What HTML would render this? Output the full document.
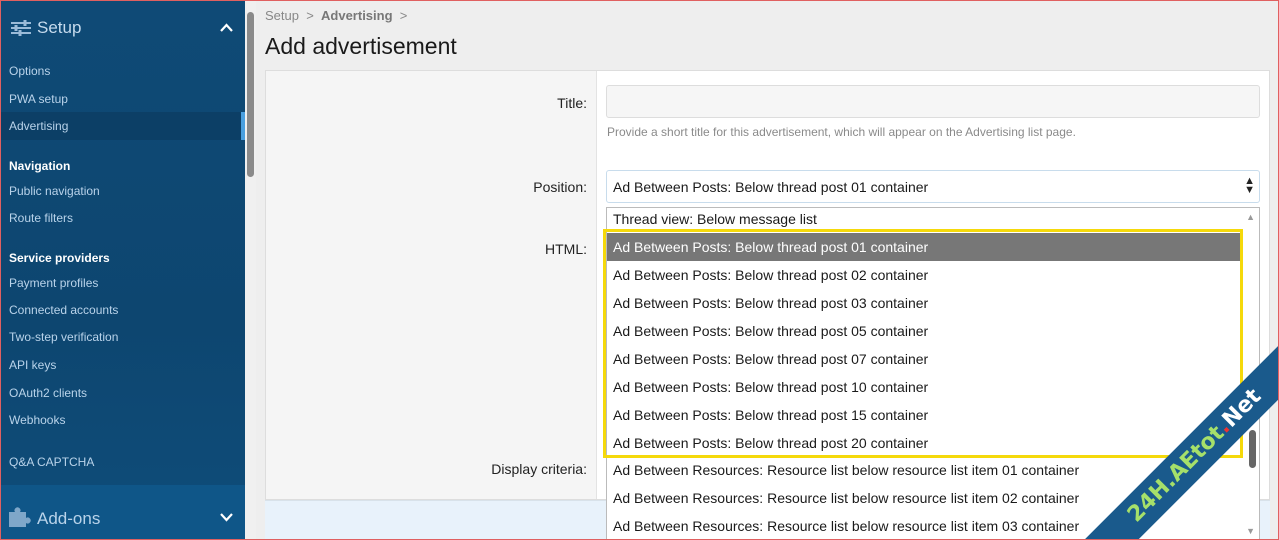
<!DOCTYPE html>
<html><head><meta charset="utf-8"><style>
*{box-sizing:border-box;margin:0;padding:0}
html,body{width:1279px;height:540px;overflow:hidden}
body{position:relative;background:#eeeeee;font-family:"Liberation Sans",sans-serif}
.sb{position:absolute;left:0;top:0;width:245px;height:540px;background:linear-gradient(#0f4a76,#0d4670 60%,#0f4d7a)}
.sb div{position:absolute;left:9px;color:#b9d3ea;font-size:12px}
.sb .h{color:#fff;font-weight:bold}
.scr{position:absolute;left:245px;top:0;width:11px;height:540px;background:#f0f0f0}
.scr i{position:absolute;left:2px;top:12px;width:7px;height:165px;background:#8a8a8a;border-radius:4px}
.lbl{position:absolute;color:#222;font-size:14px;text-align:right;width:322px;left:265px}
.dd{position:absolute;left:606px;top:207px;width:654px;height:333px;background:#fff;border:1px solid #bbb;border-bottom:none;overflow:hidden}
.it{position:absolute;left:6px;font-size:14px;color:#1a1a1a;white-space:nowrap}
</style></head><body>
<div class="sb">
<svg style="position:absolute;left:10px;top:20px" width="22" height="16" viewBox="0 0 22 16" fill="none" stroke="#9bbbd8" stroke-width="2"><path d="M1 3h20M1 8h20M1 13h20"/><path d="M15 0v6M6 5v6M10 10v6" stroke-width="3"/></svg>
<div style="left:37px;top:18px;font-size:17px;color:#c6dbee">Setup</div>
<svg style="position:absolute;left:220px;top:23px" width="13" height="9" viewBox="0 0 13 9" fill="none" stroke="#fff" stroke-width="2.2"><path d="M1 8l5.5-6 5.5 6"/></svg>
<div style="top:64px">Options</div>
<div style="top:92px">PWA setup</div>
<div style="left:0;top:112px;width:245px;height:28px;background:#0c3f66"></div>
<div style="left:241px;top:112px;width:4px;height:28px;background:#4aa0e0"></div>
<div style="top:119px">Advertising</div>
<div class="h" style="top:159px">Navigation</div>
<div style="top:184px">Public navigation</div>
<div style="top:211px">Route filters</div>
<div class="h" style="top:251px">Service providers</div>
<div style="top:276px">Payment profiles</div>
<div style="top:303px">Connected accounts</div>
<div style="top:330px">Two-step verification</div>
<div style="top:358px">API keys</div>
<div style="top:386px">OAuth2 clients</div>
<div style="top:413px">Webhooks</div>
<div style="top:455px">Q&amp;A CAPTCHA</div>
<div style="left:0;top:485px;width:245px;height:55px;background:#0f5688"></div>
<svg style="position:absolute;left:9px;top:507px" width="22" height="20" viewBox="0 0 22 20" fill="#7fa7c9"><path d="M0 5h6a3 3 0 1 1 5 0h6v6a3 3 0 1 1 0 5v4H0z"/></svg>
<div style="left:37px;top:509px;font-size:17px;color:#b9d3ea">Add-ons</div>
<svg style="position:absolute;left:220px;top:513px" width="13" height="9" viewBox="0 0 13 9" fill="none" stroke="#fff" stroke-width="2.2"><path d="M1 1l5.5 6 5.5-6"/></svg>
</div>
<div class="scr"><i></i></div>
<div style="position:absolute;left:265px;top:8px;font-size:13px;color:#888">Setup &nbsp;&gt;&nbsp; <b style="color:#777">Advertising</b> &nbsp;&gt;</div>
<div style="position:absolute;left:265px;top:33px;font-size:23px;color:#1a1a1a">Add advertisement</div>
<div style="position:absolute;left:265px;top:70px;width:1005px;height:430px;background:#fff;border:1px solid #ddd"></div>
<div style="position:absolute;left:266px;top:71px;width:331px;height:428px;background:#f5f5f5;border-right:1px solid #e3e3e3"></div>
<div style="position:absolute;left:265px;top:500px;width:1005px;height:40px;background:#e8f2fb;border-top:1px solid #d8e2ea"></div>
<div class="lbl" style="top:95px">Title:</div>
<div class="lbl" style="top:179px">Position:</div>
<div class="lbl" style="top:241px">HTML:</div>
<div class="lbl" style="top:461px">Display criteria:</div>
<div style="position:absolute;left:606px;top:85px;width:654px;height:33px;background:#f6f6f6;border:1px solid #ddd;border-radius:3px"></div>
<div style="position:absolute;left:607px;top:125px;font-size:12px;color:#8a8a8a">Provide a short title for this advertisement, which will appear on the Advertising list page.</div>
<div style="position:absolute;left:606px;top:170px;width:654px;height:33px;background:#fff;border:1px solid #c8dcec;border-radius:3px"><span style="position:absolute;left:6px;top:8px;font-size:14px;color:#1a1a1a">Ad Between Posts: Below thread post 01 container</span><span style="position:absolute;right:4px;top:6px;font-size:11px;line-height:9px;color:#222">▲<br>▼</span></div>
<div class="dd">
<div class="it" style="top:3px">Thread view: Below message list</div>
<div style="position:absolute;left:0;top:25px;width:633px;height:28px;background:#777"></div>
<div class="it" style="top:31px;color:#fff">Ad Between Posts: Below thread post 01 container</div>
<div class="it" style="top:59px">Ad Between Posts: Below thread post 02 container</div>
<div class="it" style="top:87px">Ad Between Posts: Below thread post 03 container</div>
<div class="it" style="top:115px">Ad Between Posts: Below thread post 05 container</div>
<div class="it" style="top:143px">Ad Between Posts: Below thread post 07 container</div>
<div class="it" style="top:171px">Ad Between Posts: Below thread post 10 container</div>
<div class="it" style="top:199px">Ad Between Posts: Below thread post 15 container</div>
<div class="it" style="top:227px">Ad Between Posts: Below thread post 20 container</div>
<div class="it" style="top:254px">Ad Between Resources: Resource list below resource list item 01 container</div>
<div class="it" style="top:282px">Ad Between Resources: Resource list below resource list item 02 container</div>
<div class="it" style="top:310px">Ad Between Resources: Resource list below resource list item 03 container</div>
<div style="position:absolute;right:4px;top:4px;font-size:9px;color:#999">▲</div>
<div style="position:absolute;right:4px;top:318px;font-size:9px;color:#999">▼</div>
<div style="position:absolute;right:3px;top:222px;width:7px;height:38px;background:#666;border-radius:4px"></div>
</div>
<div style="position:absolute;left:603px;top:229px;width:640px;height:229px;border:3px solid #f5d90a"></div>
<div style="position:absolute;left:0;top:0;width:1279px;height:540px;overflow:hidden;pointer-events:none">
<div style="position:absolute;left:1045px;top:437px;width:300px;height:38px;background:#1a5a8c;transform:rotate(-45deg);font-weight:bold;font-size:22px;color:#a6e06a;text-align:center;line-height:38px;font-family:'DejaVu Sans',sans-serif">24H.AEtot<span style="color:#e33">.</span><span style="color:#fff">Net</span></div>
<div style="position:absolute;left:0;top:0;width:1279px;height:540px;border:1px solid #e06060"></div>
</div>
</body></html>
